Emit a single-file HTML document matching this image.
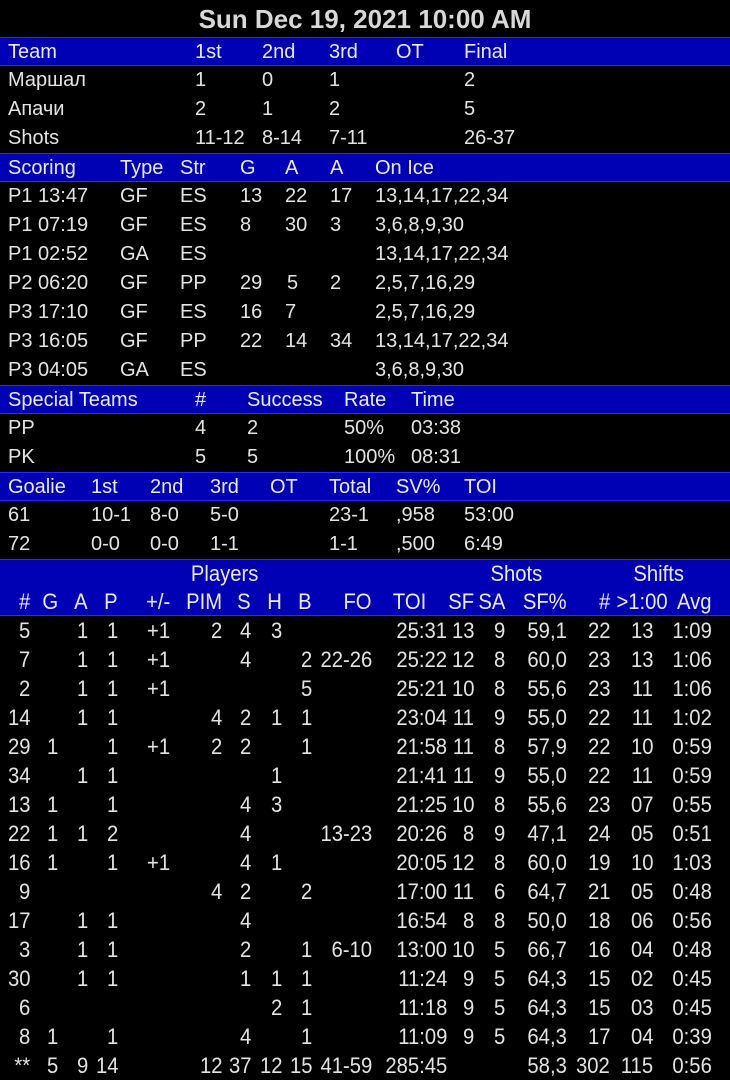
<!DOCTYPE html>
<html><head><meta charset="utf-8"><style>
*{margin:0;padding:0;box-sizing:border-box}
body{width:730px;height:1078px;background:#000;color:#e4e4e4;font-family:"Liberation Sans",sans-serif;font-size:20px;position:relative;overflow:hidden}
.title{position:absolute;top:0;left:0;width:730px;height:37px;line-height:38px;text-align:center;font-weight:bold;font-size:26px;color:#d8d8d8}
.r{position:absolute;left:0;width:730px;height:29px;line-height:29px}
.h{background:#0000b4;border-top:1px solid #2a2aff;border-bottom:1px solid #2a2aff;color:#ececff}
.r b{font-weight:normal;position:absolute;top:0;white-space:nowrap}
.p b{font-size:22px;display:inline-block;transform:scaleX(.92);transform-origin:right center}
</style></head><body>
<div class="title">Sun Dec 19, 2021 10:00 AM</div>

<div class="r h" style="top:37px"><b style="left:8px">Team</b><b style="left:195px">1st</b><b style="left:262px">2nd</b><b style="left:329px">3rd</b><b style="left:396px">OT</b><b style="left:464px">Final</b></div>
<div class="r" style="top:66px"><b style="left:8px">Маршал</b><b style="left:195px">1</b><b style="left:262px">0</b><b style="left:329px">1</b><b style="left:464px">2</b></div>
<div class="r" style="top:95px"><b style="left:8px">Апачи</b><b style="left:195px">2</b><b style="left:262px">1</b><b style="left:329px">2</b><b style="left:464px">5</b></div>
<div class="r" style="top:124px"><b style="left:8px">Shots</b><b style="left:195px">11-12</b><b style="left:262px">8-14</b><b style="left:329px">7-11</b><b style="left:464px">26-37</b></div>

<div class="r h" style="top:153px"><b style="left:8px">Scoring</b><b style="left:120px">Type</b><b style="left:180px">Str</b><b style="left:240px">G</b><b style="left:285px">A</b><b style="left:330px">A</b><b style="left:375px">On Ice</b></div>
<div class="r" style="top:182px"><b style="left:8px">P1 13:47</b><b style="left:120px">GF</b><b style="left:180px">ES</b><b style="left:240px">13</b><b style="left:285px">22</b><b style="left:330px">17</b><b style="left:375px">13,14,17,22,34</b></div>
<div class="r" style="top:211px"><b style="left:8px">P1 07:19</b><b style="left:120px">GF</b><b style="left:180px">ES</b><b style="left:240px">8</b><b style="left:285px">30</b><b style="left:330px">3</b><b style="left:375px">3,6,8,9,30</b></div>
<div class="r" style="top:240px"><b style="left:8px">P1 02:52</b><b style="left:120px">GA</b><b style="left:180px">ES</b><b style="left:375px">13,14,17,22,34</b></div>
<div class="r" style="top:269px"><b style="left:8px">P2 06:20</b><b style="left:120px">GF</b><b style="left:180px">PP</b><b style="left:240px">29</b><b style="left:287px">5</b><b style="left:330px">2</b><b style="left:375px">2,5,7,16,29</b></div>
<div class="r" style="top:298px"><b style="left:8px">P3 17:10</b><b style="left:120px">GF</b><b style="left:180px">ES</b><b style="left:240px">16</b><b style="left:285px">7</b><b style="left:375px">2,5,7,16,29</b></div>
<div class="r" style="top:327px"><b style="left:8px">P3 16:05</b><b style="left:120px">GF</b><b style="left:180px">PP</b><b style="left:240px">22</b><b style="left:285px">14</b><b style="left:330px">34</b><b style="left:375px">13,14,17,22,34</b></div>
<div class="r" style="top:356px"><b style="left:8px">P3 04:05</b><b style="left:120px">GA</b><b style="left:180px">ES</b><b style="left:375px">3,6,8,9,30</b></div>

<div class="r h" style="top:385px"><b style="left:8px">Special Teams</b><b style="left:195px">#</b><b style="left:247px">Success</b><b style="left:344px">Rate</b><b style="left:411px">Time</b></div>
<div class="r" style="top:414px"><b style="left:8px">PP</b><b style="left:195px">4</b><b style="left:247px">2</b><b style="left:344px">50%</b><b style="left:411px">03:38</b></div>
<div class="r" style="top:443px"><b style="left:8px">PK</b><b style="left:195px">5</b><b style="left:247px">5</b><b style="left:344px">100%</b><b style="left:411px">08:31</b></div>

<div class="r h" style="top:472px"><b style="left:8px">Goalie</b><b style="left:91px">1st</b><b style="left:150px">2nd</b><b style="left:210px">3rd</b><b style="left:270px">OT</b><b style="left:329px">Total</b><b style="left:396px">SV%</b><b style="left:464px">TOI</b></div>
<div class="r" style="top:501px"><b style="left:8px">61</b><b style="left:91px">10-1</b><b style="left:150px">8-0</b><b style="left:210px">5-0</b><b style="left:329px">23-1</b><b style="left:396px">,958</b><b style="left:464px">53:00</b></div>
<div class="r" style="top:530px"><b style="left:8px">72</b><b style="left:91px">0-0</b><b style="left:150px">0-0</b><b style="left:210px">1-1</b><b style="left:329px">1-1</b><b style="left:396px">,500</b><b style="left:464px">6:49</b></div>

<div style="position:absolute;top:559px;left:0;width:730px;height:57px;background:#0000b4;border-top:1px solid #2a2aff;border-bottom:1px solid #2a2aff"></div>
<div class="r p" style="top:559px;color:#ececff"><b style="right:472px">Players</b><b style="right:188px">Shots</b><b style="right:46px">Shifts</b></div>
<div class="r p" style="top:587px;color:#ececff"><b style="right:700px">#</b><b style="right:672px">G</b><b style="right:642px">A</b><b style="right:612px">P</b><b style="right:560px">+/-</b><b style="right:508px">PIM</b><b style="right:479px">S</b><b style="right:448px">H</b><b style="right:418px">B</b><b style="right:358px">FO</b><b style="right:304px">TOI</b><b style="right:256px">SF</b><b style="right:225px">SA</b><b style="right:163px">SF%</b><b style="right:120px">#</b><b style="right:62px">&gt;1:00</b><b style="right:18px">Avg</b></div>

<div class="r p" style="top:616px"><b style="right:700px">5</b><b style="right:642px">1</b><b style="right:612px">1</b><b style="right:560px">+1</b><b style="right:508px">2</b><b style="right:479px">4</b><b style="right:448px">3</b><b style="right:283px">25:31</b><b style="right:256px">13</b><b style="right:225px">9</b><b style="right:163px">59,1</b><b style="right:120px">22</b><b style="right:77px">13</b><b style="right:18px">1:09</b></div>
<div class="r p" style="top:645px"><b style="right:700px">7</b><b style="right:642px">1</b><b style="right:612px">1</b><b style="right:560px">+1</b><b style="right:479px">4</b><b style="right:418px">2</b><b style="right:358px">22-26</b><b style="right:283px">25:22</b><b style="right:256px">12</b><b style="right:225px">8</b><b style="right:163px">60,0</b><b style="right:120px">23</b><b style="right:77px">13</b><b style="right:18px">1:06</b></div>
<div class="r p" style="top:674px"><b style="right:700px">2</b><b style="right:642px">1</b><b style="right:612px">1</b><b style="right:560px">+1</b><b style="right:418px">5</b><b style="right:283px">25:21</b><b style="right:256px">10</b><b style="right:225px">8</b><b style="right:163px">55,6</b><b style="right:120px">23</b><b style="right:77px">11</b><b style="right:18px">1:06</b></div>
<div class="r p" style="top:703px"><b style="right:700px">14</b><b style="right:642px">1</b><b style="right:612px">1</b><b style="right:508px">4</b><b style="right:479px">2</b><b style="right:448px">1</b><b style="right:418px">1</b><b style="right:283px">23:04</b><b style="right:256px">11</b><b style="right:225px">9</b><b style="right:163px">55,0</b><b style="right:120px">22</b><b style="right:77px">11</b><b style="right:18px">1:02</b></div>
<div class="r p" style="top:732px"><b style="right:700px">29</b><b style="right:672px">1</b><b style="right:612px">1</b><b style="right:560px">+1</b><b style="right:508px">2</b><b style="right:479px">2</b><b style="right:418px">1</b><b style="right:283px">21:58</b><b style="right:256px">11</b><b style="right:225px">8</b><b style="right:163px">57,9</b><b style="right:120px">22</b><b style="right:77px">10</b><b style="right:18px">0:59</b></div>
<div class="r p" style="top:761px"><b style="right:700px">34</b><b style="right:642px">1</b><b style="right:612px">1</b><b style="right:448px">1</b><b style="right:283px">21:41</b><b style="right:256px">11</b><b style="right:225px">9</b><b style="right:163px">55,0</b><b style="right:120px">22</b><b style="right:77px">11</b><b style="right:18px">0:59</b></div>
<div class="r p" style="top:790px"><b style="right:700px">13</b><b style="right:672px">1</b><b style="right:612px">1</b><b style="right:479px">4</b><b style="right:448px">3</b><b style="right:283px">21:25</b><b style="right:256px">10</b><b style="right:225px">8</b><b style="right:163px">55,6</b><b style="right:120px">23</b><b style="right:77px">07</b><b style="right:18px">0:55</b></div>
<div class="r p" style="top:819px"><b style="right:700px">22</b><b style="right:672px">1</b><b style="right:642px">1</b><b style="right:612px">2</b><b style="right:479px">4</b><b style="right:358px">13-23</b><b style="right:283px">20:26</b><b style="right:256px">8</b><b style="right:225px">9</b><b style="right:163px">47,1</b><b style="right:120px">24</b><b style="right:77px">05</b><b style="right:18px">0:51</b></div>
<div class="r p" style="top:848px"><b style="right:700px">16</b><b style="right:672px">1</b><b style="right:612px">1</b><b style="right:560px">+1</b><b style="right:479px">4</b><b style="right:448px">1</b><b style="right:283px">20:05</b><b style="right:256px">12</b><b style="right:225px">8</b><b style="right:163px">60,0</b><b style="right:120px">19</b><b style="right:77px">10</b><b style="right:18px">1:03</b></div>
<div class="r p" style="top:877px"><b style="right:700px">9</b><b style="right:508px">4</b><b style="right:479px">2</b><b style="right:418px">2</b><b style="right:283px">17:00</b><b style="right:256px">11</b><b style="right:225px">6</b><b style="right:163px">64,7</b><b style="right:120px">21</b><b style="right:77px">05</b><b style="right:18px">0:48</b></div>
<div class="r p" style="top:906px"><b style="right:700px">17</b><b style="right:642px">1</b><b style="right:612px">1</b><b style="right:479px">4</b><b style="right:283px">16:54</b><b style="right:256px">8</b><b style="right:225px">8</b><b style="right:163px">50,0</b><b style="right:120px">18</b><b style="right:77px">06</b><b style="right:18px">0:56</b></div>
<div class="r p" style="top:935px"><b style="right:700px">3</b><b style="right:642px">1</b><b style="right:612px">1</b><b style="right:479px">2</b><b style="right:418px">1</b><b style="right:358px">6-10</b><b style="right:283px">13:00</b><b style="right:256px">10</b><b style="right:225px">5</b><b style="right:163px">66,7</b><b style="right:120px">16</b><b style="right:77px">04</b><b style="right:18px">0:48</b></div>
<div class="r p" style="top:964px"><b style="right:700px">30</b><b style="right:642px">1</b><b style="right:612px">1</b><b style="right:479px">1</b><b style="right:448px">1</b><b style="right:418px">1</b><b style="right:283px">11:24</b><b style="right:256px">9</b><b style="right:225px">5</b><b style="right:163px">64,3</b><b style="right:120px">15</b><b style="right:77px">02</b><b style="right:18px">0:45</b></div>
<div class="r p" style="top:993px"><b style="right:700px">6</b><b style="right:448px">2</b><b style="right:418px">1</b><b style="right:283px">11:18</b><b style="right:256px">9</b><b style="right:225px">5</b><b style="right:163px">64,3</b><b style="right:120px">15</b><b style="right:77px">03</b><b style="right:18px">0:45</b></div>
<div class="r p" style="top:1022px"><b style="right:700px">8</b><b style="right:672px">1</b><b style="right:612px">1</b><b style="right:479px">4</b><b style="right:418px">1</b><b style="right:283px">11:09</b><b style="right:256px">9</b><b style="right:225px">5</b><b style="right:163px">64,3</b><b style="right:120px">17</b><b style="right:77px">04</b><b style="right:18px">0:39</b></div>
<div class="r p" style="top:1051px"><b style="right:700px">**</b><b style="right:672px">5</b><b style="right:642px">9</b><b style="right:612px">14</b><b style="right:508px">12</b><b style="right:479px">37</b><b style="right:448px">12</b><b style="right:418px">15</b><b style="right:358px">41-59</b><b style="right:283px">285:45</b><b style="right:163px">58,3</b><b style="right:120px">302</b><b style="right:77px">115</b><b style="right:18px">0:56</b></div>
</body></html>
